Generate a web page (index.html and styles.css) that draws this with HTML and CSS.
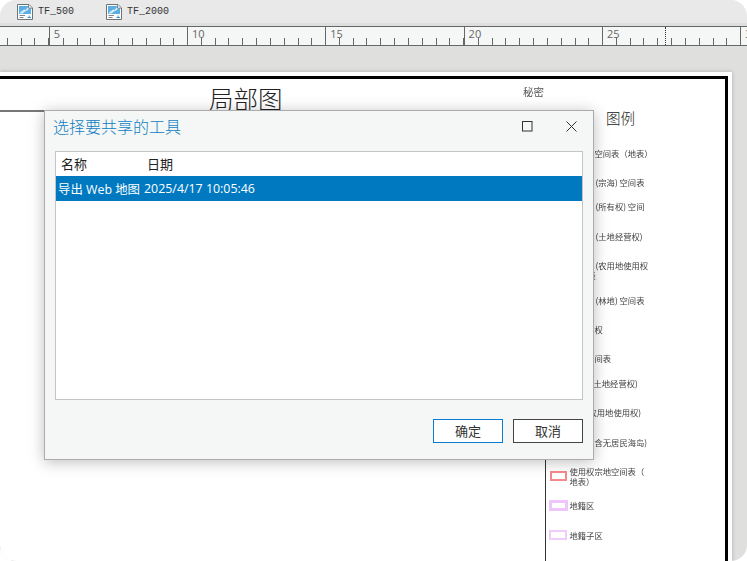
FILE: index.html
```html
<!DOCTYPE html>
<html lang="zh-CN">
<head>
<meta charset="utf-8">
<title>选择要共享的工具</title>
<link rel="stylesheet" href="styles.css">
</head>
<body>
<div class="app">
  <svg width="0" height="0" class="defs" aria-hidden="true">
    <symbol id="map-doc" viewBox="0 0 16 16">
      <path d="M.5.5H12L15.5 4V15.5H.5Z" fill="#fff" stroke="#6b7278"/>
      <path d="M2 2H11.5L14 4.5V10H2Z" fill="#5aaee3"/>
      <path d="M3 8.5 7 5.5 8.5 6 10.5 3.5 13 4 10 6.5 8 7.5 5.5 9.5H3Z" fill="#d8ecf9"/>
      <path d="M11.5.8V4.2H15" fill="#eef1f3" stroke="#6b7278" stroke-width=".8"/>
      <path d="M2.5 11.5H8M2.5 13.5H6.5" stroke="#7c8389"/>
      <path d="M10.5 13.5H14M12.2 11.5V13" stroke="#3d94d3"/>
    </symbol>
  </svg>

  <div class="tabs">
    <div class="tab"><svg class="tab-icon"><use href="#map-doc"/></svg><span>TF_500</span></div>
    <div class="tab"><svg class="tab-icon"><use href="#map-doc"/></svg><span>TF_2000</span></div>
  </div>
  <div class="strip"></div>

  <div class="ruler">
    <div class="major"></div>
    <div class="major"><span>5</span></div>
    <div class="major"><span>10</span></div>
    <div class="major"><span>15</span></div>
    <div class="major"><span>20</span></div>
    <div class="major"><span>25</span></div>
    <div class="major"><span>30</span></div>
    <i class="cursor-mark"></i>
  </div>

  <div class="workspace">
    <div class="page">
      <div class="frame">
        <div class="title-rule"></div>
        <div class="map-title">局部图</div>
        <div class="secret">秘密</div>
        <div class="legend">
          <div class="legend-title">图例</div>
          <ul class="legend-list">
            <li><span class="swatch"></span><span class="label at25">空间表（地表）</span></li>
            <li><span class="swatch"></span><span class="label at26">(宗海) 空间表</span></li>
            <li><span class="swatch"></span><span class="label at26 up">(所有权) 空间</span></li>
            <li><span class="swatch"></span><span class="label at26 up">(土地经营权)</span></li>
            <li><span class="swatch"></span><span class="label at18 hang">(农用地使用权<br>表</span></li>
            <li><span class="swatch"></span><span class="label at26">(林地) 空间表</span></li>
            <li><span class="swatch"></span><span class="label at25">权</span></li>
            <li><span class="swatch"></span><span class="label at25">间表</span></li>
            <li><span class="swatch"></span><span class="label at24 up">土地经营权)</span></li>
            <li><span class="swatch"></span><span class="label at19 up">农用地使用权)</span></li>
            <li><span class="swatch"></span><span class="label at25 up">含无居民海岛)</span></li>
            <li><span class="swatch red"></span><span class="label">使用权宗地空间表（<br>地表）</span></li>
            <li><span class="swatch pink-thick"></span><span class="label">地籍区</span></li>
            <li><span class="swatch pink-thin"></span><span class="label">地籍子区</span></li>
          </ul>
        </div>
      </div>
    </div>
  </div>

  <section class="dialog">
    <header class="dialog-head">
      <h1>选择要共享的工具</h1>
      <svg class="win-icon max" viewBox="0 0 11 11"><rect x=".5" y=".5" width="9.5" height="9.5"/></svg>
      <svg class="win-icon close" viewBox="0 0 11 11"><path d="M.5.5 10.5 10.5M10.5.5.5 10.5"/></svg>
    </header>
    <div class="list">
      <div class="list-head"><span class="col-name">名称</span><span>日期</span></div>
      <div class="list-row"><span class="cell-name">导出 Web 地图</span><span>2025/4/17 10:05:46</span></div>
    </div>
    <footer class="dialog-foot">
      <button class="btn primary">确定</button>
      <button class="btn">取消</button>
    </footer>
  </section>
</div>
</body>
</html>
```

FILE: styles.css
```css
* { box-sizing: border-box; }
html, body { margin: 0; height: 100%; background: #fff; }
.app {
  position: relative;
  width: 747px;
  height: 561px;
  display: flex;
  flex-direction: column;
  overflow: hidden;
  border-radius: 16px;
  font-family: "Noto Sans CJK SC", "Noto Sans", sans-serif;
}
.defs { position: absolute; }

.tabs {
  height: 23px;
  flex: none;
  display: flex;
  align-items: center;
  padding-left: 17px;
  gap: 32px;
  background: #e9e9e9;
}
.tab {
  display: flex;
  align-items: center;
  gap: 5px;
  font: 10px/16px "Liberation Mono", "Noto Sans CJK SC", monospace;
  color: #333;
}
.tab-icon { width: 16px; height: 16px; display: block; }
.strip { height: 3px; flex: none; background: #dedede; }

.ruler {
  position: relative;
  height: 20px;
  flex: none;
  display: flex;
  background: #f5f7f6;
  border-top: 1px solid #666;
  border-bottom: 1px solid #666;
  overflow: hidden;
}
.major {
  flex: none;
  width: 138.3px;
  height: 18px;
  border-left: 1px solid #666;
  padding-left: 4px;
  font: 11px/13px "Open Sans", sans-serif;
  color: #666;
  background: repeating-linear-gradient(90deg, transparent 0 12.83px, #666 12.83px 13.83px) left bottom / 100% 7px no-repeat;
}
.major:first-child { margin-left: -89.6px; }
.cursor-mark {
  position: absolute;
  left: 665px;
  top: 0;
  bottom: 0;
  border-left: 1px dotted #333;
}

.workspace {
  flex: 1;
  min-height: 0;
  padding: 26px 15px 0 0;
  background: #dfdfdd;
}
.page {
  height: 100%;
  padding: 4px 4px 0 0;
  background: #fff;
  box-shadow: 0 0 4px rgba(0, 0, 0, .22);
}
.frame {
  position: relative;
  height: 100%;
  border-top: 3px solid #000;
  border-right: 3px solid #000;
}
.title-rule {
  width: 545px;
  height: 33px;
  border-bottom: 2px solid #777;
}
.map-title {
  position: absolute;
  left: 209px;
  top: 4px;
  font-size: 24.5px;
  line-height: 32px;
  font-weight: 300;
  color: #222;
}
.secret {
  position: absolute;
  left: 523px;
  top: 6px;
  font-size: 10.5px;
  line-height: 14px;
  color: #555;
  filter: blur(.25px);
}
.legend {
  position: absolute;
  left: 545px;
  top: 40px;
  bottom: -10px;
  width: 180px;
  border-left: 1.5px solid #333;
}
.legend-title {
  position: absolute;
  left: 60px;
  top: -11px;
  font-size: 14.5px;
  line-height: 20px;
  font-weight: 300;
  color: #222;
}
.legend-list {
  list-style: none;
  margin: 0;
  padding: 19px 0 0 3.5px;
  display: grid;
  grid-auto-rows: 29.4px;
  filter: blur(.25px);
}
.legend-list li {
  display: flex;
  align-items: center;
  font-size: 8.3px;
  line-height: 10px;
  color: #444;
  white-space: nowrap;
}
.label.up { margin-bottom: 10px; }
.label.at18 { padding-left: 18px; }
.label.at19 { padding-left: 19px; }
.label.at24 { padding-left: 24px; }
.label.at25 { padding-left: 25px; }
.label.at26 { padding-left: 26px; }
.label.hang { text-indent: 8px; }
.swatch { flex: none; width: 17px; height: 10px; margin-right: 3px; }
.swatch.red { border: 2px solid #f58a8c; }
.swatch.pink-thick {
  width: 19px;
  height: 11px;
  margin: 0 2px 0 -1px;
  border: 3px solid #efc6fb;
}
.swatch.pink-thin {
  width: 18px;
  margin: 0 2.5px 0 -.5px;
  border: 2px solid #f0ccfb;
}

.dialog {
  position: absolute;
  left: 44px;
  top: 110px;
  width: 550px;
  height: 350px;
  display: flex;
  flex-direction: column;
  background: #f5f7f6;
  border: 1px solid #acacac;
  box-shadow: 0 2px 14px rgba(0, 0, 0, .26);
}
.dialog-head {
  height: 40px;
  flex: none;
  display: flex;
  align-items: center;
  padding: 0 16px 10px 8px;
}
.dialog-head h1 {
  flex: 1;
  margin: 0;
  font-size: 16px;
  line-height: 24px;
  font-weight: 300;
  color: #0f7dc2;
}
.win-icon { width: 11px; height: 11px; fill: none; stroke: #333; stroke-width: 1; display: block; }
.win-icon.close { margin-left: 33px; }
.list {
  height: 249px;
  flex: none;
  margin: 0 10px;
  background: #fff;
  border: 1px solid #c4c4c4;
}
.list-head {
  height: 24px;
  display: flex;
  align-items: center;
  padding: 0 0 2px 5px;
  font-size: 13px;
  color: #222;
}
.col-name { width: 86px; }
.list-row {
  height: 25px;
  display: flex;
  align-items: center;
  padding-left: 2px;
  background: #0079c1;
  color: #fff;
  font: 12.4px "Open Sans", "Noto Sans CJK SC", sans-serif;
}
.cell-name { width: 86px; white-space: nowrap; }
.dialog-foot {
  flex: 1;
  display: flex;
  justify-content: flex-end;
  gap: 10px;
  padding: 19px 10px 0 0;
}
.btn {
  width: 70px;
  height: 24px;
  padding: 0 0 0 0;
  background: #fff;
  border: 1px solid #444;
  font: 13px/22px "Noto Sans CJK SC", sans-serif;
  color: #333;
}
.btn.primary { border-color: #0a7bd0; }
```
